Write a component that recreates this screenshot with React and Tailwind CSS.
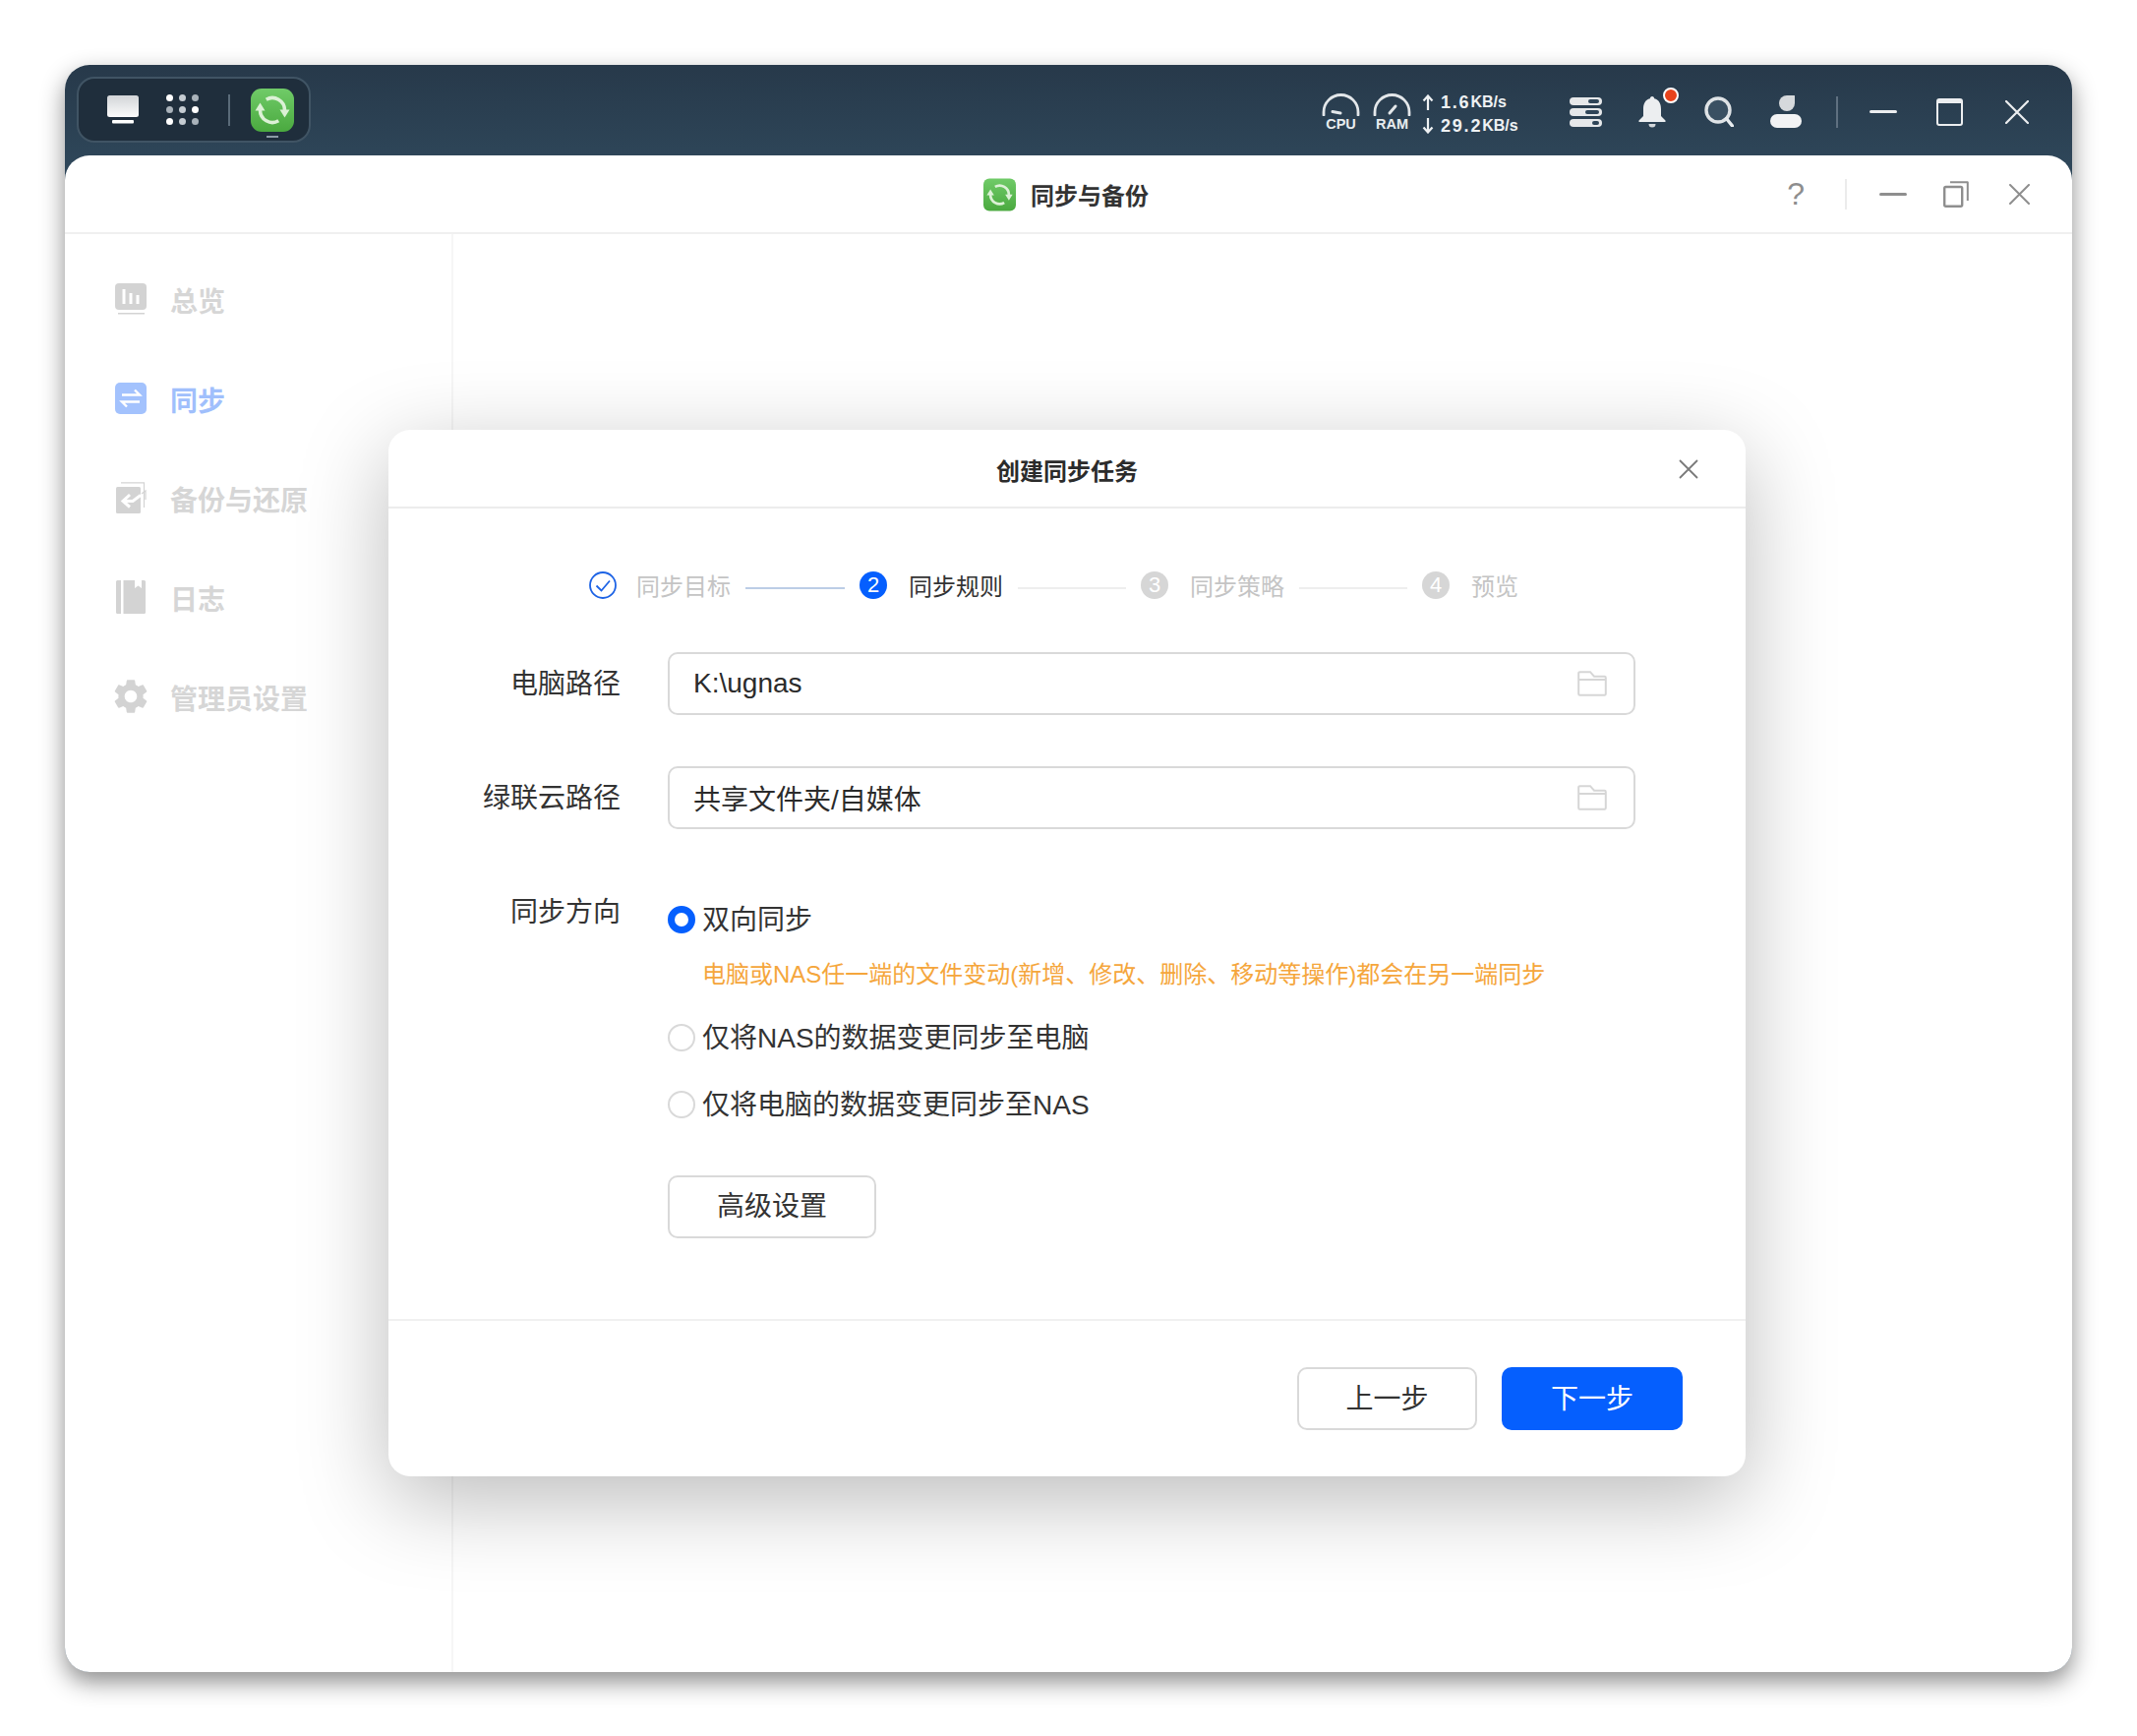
import { MdSettings } from "react-icons/md";

const SyncLogo = ({ className, radius = 10 }) => (
  <svg viewBox="0 0 44 44" className={className}>
    <defs>
      <linearGradient id="syncGreen" x1="0" y1="0" x2="0" y2="1">
        <stop offset="0" stopColor="#70cb68" />
        <stop offset="1" stopColor="#4aa93f" />
      </linearGradient>
    </defs>
    <rect width="44" height="44" rx={radius} fill="url(#syncGreen)" />
    <path d="M15.750 11.200A12.500 12.500 0 0 1 34.500 22" fill="none" stroke="#dcf1d6" strokeWidth="3.600" />
    <path d="M28.250 32.800A12.500 12.500 0 0 1 9.500 22" fill="none" stroke="#dcf1d6" strokeWidth="3.600" />
    <path d="M29.500 21.500h10l-5 8zM14.500 22.500h-10l5-8z" fill="#dcf1d6" />
  </svg>
);

const Gauge = ({ label, needle }) => (
  <div className="flex w-[39px] flex-col items-center">
    <svg viewBox="0 0 39 23" className="h-[23px] w-[39px]">
      <path d="M2 22v-3a17.500 17.500 0 0 1 35 0v3" fill="none" stroke="#e3e7ea" strokeWidth="2.800" strokeLinecap="round" />
      <path d={needle} stroke="#e3e7ea" strokeWidth="3" strokeLinecap="round" fill="none" />
    </svg>
    <span className="mt-[3px] text-[14.500px] leading-[11px] font-bold text-[#e8ecef]">{label}</span>
  </div>
);

const NetLine = ({ up, value }) => (
  <div className="flex h-[24px] items-center text-[#eef1f3]">
    <svg viewBox="0 0 12 16" className="mr-[7px] h-[16px] w-[12px]">
      {up ? (
        <path d="M6 16V2M1.500 6.500L6 1.500l4.500 5" fill="none" stroke="currentColor" strokeWidth="2.200" />
      ) : (
        <path d="M6 0v14M1.500 9.500L6 14.500l4.500-5" fill="none" stroke="currentColor" strokeWidth="2.200" />
      )}
    </svg>
    <span className="text-[18px] leading-none font-bold tracking-[1.800px]">{value}</span>
    <span className="text-[16px] leading-none font-bold">KB/s</span>
  </div>
);

const StoragePill = ({ slot }) => (
  <div className="flex h-[8px] w-[33px] items-center justify-end rounded-full bg-[#e6e8ea] pr-[3px]">
    <div className={`h-[4px] rounded-full bg-[#2f4558] ${slot}`} />
  </div>
);

const TopBar = () => (
  <div className="flex h-[92px] shrink-0 items-start pt-[12px] pl-[12px]">
    <div className="flex h-[67px] w-[238px] items-center rounded-[18px] border-2 border-[#405464] bg-[#1f2e3c] pl-[29px]">
      <svg viewBox="0 0 32 29" className="h-[29px] w-[32px]">
        <defs>
          <linearGradient id="monitorFill" x1="0" y1="0" x2="0" y2="1">
            <stop offset="0" stopColor="#d2d5d8" />
            <stop offset="1" stopColor="#fbfbfb" />
          </linearGradient>
        </defs>
        <rect width="32" height="22" rx="2.500" fill="url(#monitorFill)" />
        <rect x="5" y="25" width="22" height="3.500" rx="1" fill="#ffffff" />
      </svg>
      <div className="ml-[28px] grid grid-cols-3 gap-x-[6px] gap-y-[5px]">
        {["#fff", "#c5ccd2", "#a9b2ba", "#a9b2ba", "#c5ccd2", "#fff", "#fff", "#c5ccd2", "#a9b2ba"].map((c, i) => (
          <span key={i} className="h-[7px] w-[7px] rounded-full" style={{ backgroundColor: c }} />
        ))}
      </div>
      <div className="ml-[30px] h-[32px] w-[2px] bg-[#5a6b79]" />
      <div className="relative ml-[21px]">
        <SyncLogo className="block h-[44px] w-[44px]" radius={11} />
        <div className="absolute -bottom-[6px] left-[16px] h-[2px] w-[12px] bg-[#8c9aa6]" />
      </div>
    </div>

    <div className="ml-auto flex h-[67px] items-center pt-[4px] pr-[44px]">
      <Gauge label="CPU" needle="M11 18.500l8 1.500" />
      <div className="ml-[13px]">
        <Gauge label="RAM" needle="M17 20l6-7" />
      </div>
      <div className="ml-[11px] w-[98px] pt-[4px]">
        <NetLine up value="1.6" />
        <NetLine value="29.2" />
      </div>
      <div className="ml-[52px] flex flex-col gap-[3px]">
        <StoragePill slot="w-[11px]" />
        <StoragePill slot="w-[14px]" />
        <StoragePill slot="w-[7px]" />
      </div>
      <div className="relative ml-[36px]">
        <svg viewBox="0 0 30 32" className="block h-[32px] w-[30px]">
          <path d="M15 0c-1.300 0-2.200 1-2.200 2.300C7.700 3.500 6 8 6 13v7l-4.500 4.500V26h27v-1.500L24 20v-7c0-5-1.700-9.500-6.800-10.700C17.200 1 16.300 0 15 0z" fill="#eceef0" />
          <path d="M11.500 28h7a3.500 3.500 0 0 1-7 0z" fill="#d3d7da" />
        </svg>
        <div className="absolute -top-[9px] -right-[12px] h-[16px] w-[16px] rounded-full border-2 border-white bg-[#e8431c]" />
      </div>
      <svg viewBox="0 0 30 31" className="ml-[38px] h-[31px] w-[30px]">
        <circle cx="14" cy="14" r="12" fill="#3a5062" stroke="#dfe3e6" strokeWidth="3.400" />
        <path d="M22.500 22.500l6 7.500" stroke="#e8ecef" strokeWidth="3.400" strokeLinecap="round" />
      </svg>
      <svg viewBox="0 0 32 33" className="ml-[37px] h-[33px] w-[32px]">
        <path d="M17 0h7.500q.5 0 .5.500V8a8 8 0 1 1-8-8z" fill="#d6d9dc" />
        <rect y="19" width="32" height="14" rx="7" fill="#f2f3f4" />
      </svg>
      <div className="ml-[35px] h-[32px] w-[2px] bg-[#5f7080]" />
      <div className="ml-[32px] h-[3px] w-[28px] rounded-full bg-[#eceef0]" />
      <div className="ml-[40px] h-[28px] w-[27px] rounded-[3px] border-2 border-t-[5px] border-[#eceef0]" />
      <svg viewBox="0 0 24 24" className="ml-[43px] h-[24px] w-[24px]">
        <path d="M1 1l22 22M23 1L1 23" stroke="#eceef0" strokeWidth="2.200" strokeLinecap="round" />
      </svg>
    </div>
  </div>
);

const TitleBar = () => (
  <div className="relative flex h-[80px] shrink-0 items-center justify-center border-b-2 border-[#f0f0f0] pr-[5px]">
    <SyncLogo className="mt-[2px] h-[34px] w-[33px]" radius={8} />
    <span className="ml-[15px] pt-[5px] text-[24px] font-semibold text-[#333333]">同步与备份</span>
    <div className="absolute top-0 right-[43px] flex h-[78px] items-center">
      <span className="text-[32px] leading-none font-light text-[#8e8e8e]">?</span>
      <div className="ml-[41px] h-[31px] w-[2px] bg-[#ececec]" />
      <div className="ml-[33px] h-[3px] w-[28px] rounded-full bg-[#8e8e8e]" />
      <svg viewBox="0 0 26 27" className="ml-[37px] h-[27px] w-[26px]">
        <rect x="1.200" y="6" width="18" height="19.800" rx="1.500" fill="none" stroke="#8e8e8e" strokeWidth="2.400" />
        <path d="M7 1.200h17.500a.5.5 0 0 1 .3.3V20" fill="none" stroke="#8e8e8e" strokeWidth="2" />
      </svg>
      <svg viewBox="0 0 21 21" className="ml-[41px] h-[21px] w-[21px]">
        <path d="M1 1l19 19M20 1L1 20" stroke="#8e8e8e" strokeWidth="2" strokeLinecap="round" />
      </svg>
    </div>
  </div>
);

const navItems = [
  {
    label: "总览",
    icon: (
      <svg viewBox="0 0 32 32" className="h-[32px] w-[32px]">
        <rect width="32" height="27" rx="4" fill="#d3d3d3" />
        <path d="M9 6v15M16 10v11M23 12v9" stroke="#fff" strokeWidth="3" />
        <rect x="3" y="30" width="27" height="1.500" fill="#d3d3d3" />
      </svg>
    ),
  },
  {
    label: "同步",
    active: true,
    icon: (
      <svg viewBox="0 0 32 32" className="h-[32px] w-[32px]">
        <rect width="32" height="32" rx="5" fill="#a3c2fd" />
        <path d="M7 12.500h18l-5-5M25 19.500H7l5 5" fill="none" stroke="#fff" strokeWidth="2.400" />
      </svg>
    ),
  },
  {
    label: "备份与还原",
    icon: (
      <svg viewBox="0 0 32 32" className="h-[32px] w-[32px]">
        <path d="M6 .8h23.500V26" fill="none" stroke="#d3d3d3" strokeWidth="1.200" />
        <rect x="1" y="5" width="25" height="27" rx="1.500" fill="#d3d3d3" />
        <path d="M15 13l-7 6.500 7 6M8 19.500h10l8-6" fill="none" stroke="#fff" strokeWidth="3" />
        <path d="M27 12l4-3v9" fill="none" stroke="#d3d3d3" strokeWidth="1.200" />
      </svg>
    ),
  },
  {
    label: "日志",
    icon: (
      <svg viewBox="0 0 32 34" className="h-[34px] w-[32px]">
        <rect x="1" width="30" height="34" rx="1.500" fill="#d3d3d3" />
        <rect x="6" width="2.500" height="34" fill="#fff" />
        <path d="M20 0h7v8l-3.500-2.500L20 8z" fill="#fff" />
      </svg>
    ),
  },
  {
    label: "管理员设置",
    icon: <MdSettings className="h-[42px] w-[42px] shrink-0 text-[#d3d3d3]" />,
  },
];

const Sidebar = () => (
  <div className="w-[395px] shrink-0 border-r-2 border-[#f6f6f6] pt-[49px] pl-[51px]">
    {navItems.map((item) => (
      <div key={item.label} className="mb-[61px] flex h-[40px] items-center">
        <div className="flex w-[32px] -translate-y-[3px] items-center justify-center">{item.icon}</div>
        <span className={`ml-[24px] pt-[2px] text-[28px] font-semibold ${item.active ? "text-[#a0bffc]" : "text-[#d6d6d6]"}`}>
          {item.label}
        </span>
      </div>
    ))}
  </div>
);

const Step = ({ n, label, state, line }) => (
  <>
    {state === "done" ? (
      <svg viewBox="0 0 28 28" className="h-[28px] w-[28px]">
        <circle cx="14" cy="14" r="13" fill="none" stroke="#1d63e5" strokeWidth="1.800" />
        <path d="M7.500 14.500l5 5 8.500-10" fill="none" stroke="#1d63e5" strokeWidth="1.800" />
      </svg>
    ) : (
      <span
        className={`flex h-[28px] w-[28px] items-center justify-center rounded-full text-[22px] leading-none text-white ${
          state === "active" ? "bg-[#055ffe]" : "bg-[#d6d6d6]"
        }`}
      >
        {n}
      </span>
    )}
    <span
      className={`pt-[4px] text-[24px] leading-[32px] ${state === "done" ? "ml-[20px]" : "ml-[22px]"} ${
        state === "active" ? "text-[#333333]" : "text-[#c4c4c4]"
      }`}
    >
      {label}
    </span>
    {line && <div className={`mx-[15px] mt-[6px] h-[2px] ${line}`} />}
  </>
);

const FolderIcon = () => (
  <svg viewBox="0 0 30 26" className="h-[26px] w-[30px]">
    <path
      d="M1.200 9V2.500A1.300 1.300 0 0 1 2.500 1.200H13l4 4.500h10.500a1.300 1.300 0 0 1 1.300 1.300v16.500a1.300 1.300 0 0 1-1.300 1.300h-25a1.300 1.300 0 0 1-1.300-1.300V9h27.600"
      fill="none"
      stroke="#d6d6d6"
      strokeWidth="2"
    />
  </svg>
);

const PathRow = ({ label, value, valueClass, className }) => (
  <div className={`flex items-center ${className}`}>
    <label className="w-[236px] pt-[2px] text-right text-[28px] text-[#333333]">{label}</label>
    <div className="ml-[48px] flex h-[64px] w-[984px] items-center justify-between rounded-[10px] border-2 border-[#d9d9d9] pr-[27px] pl-[24px]">
      <span className={`text-[28px] text-[#2b2b2b] ${valueClass}`}>{value}</span>
      <FolderIcon />
    </div>
  </div>
);

const Radio = ({ label, checked, className }) => (
  <div className={`flex h-[40px] items-center ${className || ""}`}>
    <span
      className={`h-[28px] w-[28px] rounded-full ${
        checked ? "border-[7px] border-[#055ffe]" : "border-2 border-[#d9d9d9]"
      }`}
    />
    <span className="ml-[7px] pt-[2px] text-[28px] text-[#333333]">{label}</span>
  </div>
);

const Dialog = () => (
  <div className="absolute top-[279px] left-[329px] flex h-[1064px] w-[1380px] flex-col rounded-[22px] bg-white shadow-[0_24px_90px_rgba(0,0,0,0.27)]">
    <div className="relative flex h-[80px] shrink-0 items-center justify-center border-b-2 border-[#ececec]">
      <span className="pt-[8px] text-[24px] font-semibold text-[#2b2b2b]">创建同步任务</span>
      <svg viewBox="0 0 20 20" className="absolute top-[30px] right-[48px] h-[20px] w-[20px]">
        <path d="M1 1l18 18M19 1L1 19" stroke="#7a7a7a" strokeWidth="1.800" />
      </svg>
    </div>

    <div className="flex-1">
      <div className="mt-[64px] flex h-[28px] items-center pl-[204px]">
        <Step label="同步目标" state="done" line="w-[101px] bg-[#bccde6]" />
        <Step n="2" label="同步规则" state="active" line="w-[110px] bg-[#eeeeee]" />
        <Step n="3" label="同步策略" line="w-[110px] bg-[#eeeeee]" />
        <Step n="4" label="预览" />
      </div>

      <PathRow label="电脑路径" value="K:\ugnas" className="mt-[54px]" />
      <PathRow label="绿联云路径" value="共享文件夹/自媒体" valueClass="pt-[5px]" className="mt-[52px]" />

      <div className="mt-[64px] flex items-start">
        <div className="h-[40px] w-[236px] pt-[1px] text-right text-[28px] leading-[40px] text-[#333333]">同步方向</div>
        <div className="ml-[48px] pt-[8px]">
          <Radio label="双向同步" checked />
          <div className="mt-[20px] pl-[35px] text-[24px] leading-[32px] text-[#f5a63c]">
            电脑或NAS任一端的文件变动(新增、修改、删除、移动等操作)都会在另一端同步
          </div>
          <Radio label="仅将NAS的数据变更同步至电脑" className="mt-[28px]" />
          <Radio label="仅将电脑的数据变更同步至NAS" className="mt-[28px]" />
          <button className="mt-[52px] h-[64px] w-[212px] rounded-[10px] border-2 border-[#d9d9d9] text-[28px] text-[#333333]">
            高级设置
          </button>
        </div>
      </div>
    </div>

    <div className="flex h-[160px] shrink-0 items-start justify-end gap-[25px] border-t-2 border-[#f0f0f0] pt-[47px] pr-[64px]">
      <button className="h-[64px] w-[183px] rounded-[10px] border-2 border-[#d9d9d9] pt-[2px] text-[28px] text-[#333333]">
        上一步
      </button>
      <button className="h-[64px] w-[184px] rounded-[10px] bg-[#055ffe] pt-[2px] text-[28px] text-white">下一步</button>
    </div>
  </div>
);

export default function App() {
  return (
    <div className="min-h-[1765px] bg-white pt-[66px] pl-[66px] font-['Liberation_Sans','Noto_Sans_CJK_SC',sans-serif]">
      <div className="flex h-[1634px] w-[2041px] flex-col rounded-[25px] bg-linear-to-b from-[#27394a] to-[#2e4659] to-[6%] shadow-[0_10px_24px_rgba(0,0,0,0.45)]">
        <TopBar />
        <div className="relative flex flex-1 flex-col rounded-[25px] bg-white">
          <TitleBar />
          <div className="flex flex-1">
            <Sidebar />
          </div>
          <Dialog />
        </div>
      </div>
    </div>
  );
}
